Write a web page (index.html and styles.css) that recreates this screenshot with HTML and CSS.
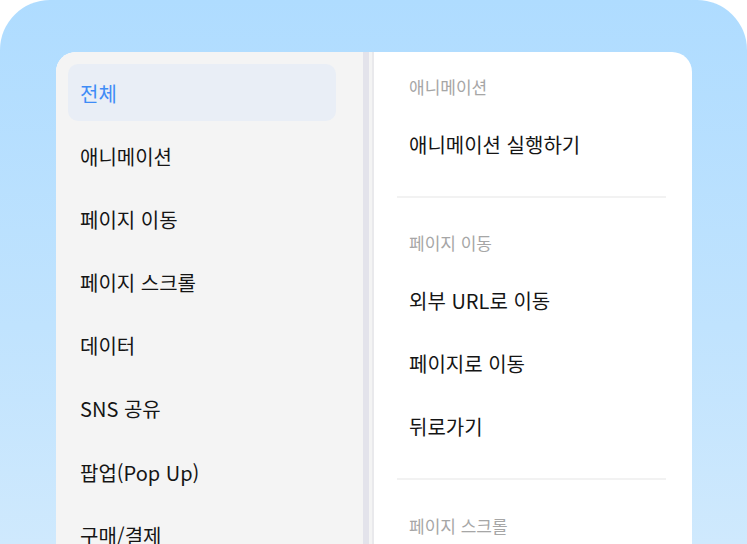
FILE: index.html
```html
<!DOCTYPE html>
<html lang="ko">
  <head>
    <meta charset="UTF-8" />
    <meta name="viewport" content="width=device-width, initial-scale=1.0" />
    <title>인터랙션 선택</title>
    <link rel="stylesheet" href="styles.css">
  </head>
  <body>
    <div class="frame">
      <div class="panel">
        <ul class="category-list">
          <li class="category active">전체</li>
          <li class="category">애니메이션</li>
          <li class="category">페이지 이동</li>
          <li class="category">페이지 스크롤</li>
          <li class="category">데이터</li>
          <li class="category">SNS 공유</li>
          <li class="category">팝업(Pop Up)</li>
          <li class="category">구매/결제</li>
        </ul>
        <div class="scrollbar"></div>
        <div class="action-list">
          <section class="group">
            <h3 class="group-title">애니메이션</h3>
            <div class="action">애니메이션 실행하기</div>
          </section>
          <section class="group">
            <h3 class="group-title">페이지 이동</h3>
            <div class="action">외부 URL로 이동</div>
            <div class="action">페이지로 이동</div>
            <div class="action">뒤로가기</div>
          </section>
          <section class="group">
            <h3 class="group-title">페이지 스크롤</h3>
          </section>
        </div>
      </div>
    </div>
  </body>
</html>
```

FILE: styles.css
```css
html,
body {
  margin: 0;
  padding: 0;
  background: #ffffff;
}

body {
  font-family: "Noto Sans CJK KR", "Noto Sans", sans-serif;
  color: #151515;
  overflow: hidden;
}

.frame {
  height: 544px;
  box-sizing: border-box;
  padding: 52px 55px 0 56px;
  border-radius: 50px 50px 0 0;
  background: linear-gradient(180deg, #afdcff 0%, #c0e3fe 60%, #cfe9fd 100%);
  display: flex;
}

.panel {
  flex: 1;
  display: flex;
  border-radius: 20px 20px 0 0;
  overflow: hidden;
  background: #ffffff;
}

.category-list {
  width: 307px;
  box-sizing: border-box;
  margin: 0;
  padding: 12px 27px 0 12px;
  list-style: none;
  background: #f4f4f4;
  display: flex;
  flex-direction: column;
  gap: 6px;
}

.category {
  flex: none;
  height: 57.1px;
  line-height: 59px;
  padding-left: 12px;
  border-radius: 10px;
  font-size: 20px;
  white-space: nowrap;
}

.category.active {
  background: #e9eef6;
  color: #3f8cf6;
}

.scrollbar {
  width: 11px;
  background: linear-gradient(90deg, #e3e3eb 0, #e3e3eb 6px, #f4f4f4 6px, #f4f4f4 9px, #e9e9ec 9px, #e9e9ec 11px);
}

.action-list {
  flex: 1;
  padding: 0 26px 0 23px;
}

.group {
  padding-top: 25px;
  padding-bottom: 20px;
  border-bottom: 2px solid #f2f2f2;
}

.group + .group {
  padding-top: 35px;
}

.group:last-child {
  padding-top: 36px;
}

.group-title {
  margin: 0 0 16px;
  padding-left: 12px;
  font-size: 17px;
  font-weight: normal;
  line-height: 20px;
  color: #a6a6a6;
}

.action {
  height: 63px;
  line-height: 63px;
  padding-left: 12px;
  font-size: 20px;
  white-space: nowrap;
}
```
